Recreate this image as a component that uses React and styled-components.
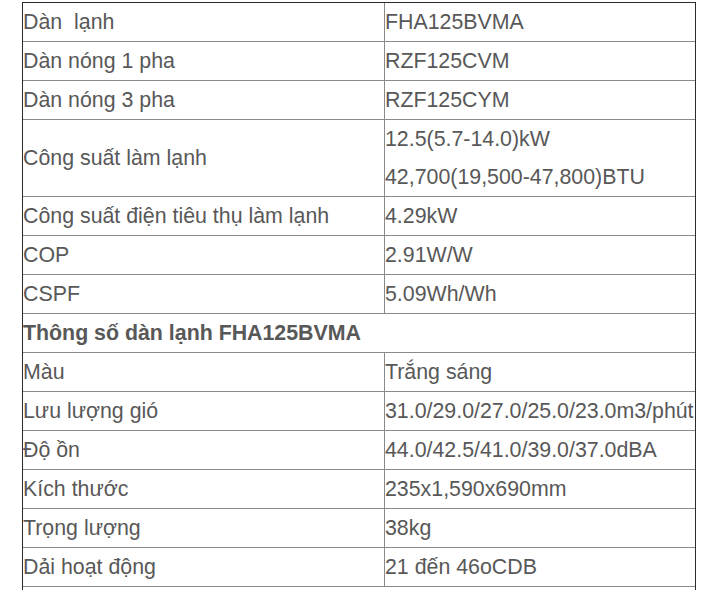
import React from 'react';
import styled, { createGlobalStyle } from 'styled-components';

const GlobalStyle = createGlobalStyle`
    html, body {
        margin: 0;
        padding: 0;
        background: #fff;
        overflow: hidden;
    }
`;

const Page = styled.div`
    padding: 2px 0 0 22px;
    font-family: "Liberation Sans", Arial, sans-serif;
    font-size: 21.35px;
    color: #585858;
`;

const Table = styled.div`
    width: 674px;
    box-sizing: border-box;
    border: 1px solid #2b2b2b;
    border-bottom: none;
`;

const Row = styled.div`
    display: grid;
    grid-template-columns: ${({ $full }) => ($full ? '1fr' : '361px 1fr')};
    min-height: 38px;
    border-bottom: 1px solid #8a8a8a;
`;

const Label = styled.div`
    display: flex;
    align-items: center;
    line-height: 38px;
    white-space: pre;
    font-weight: ${({ $bold }) => ($bold ? 700 : 400)};
`;

const Value = styled.div`
    border-left: 1px solid #8a8a8a;
    line-height: 38px;
    white-space: nowrap;
`;

const rows = [
    ['Dàn\u00a0 lạnh', ['FHA125BVMA']],
    ['Dàn nóng 1 pha', ['RZF125CVM']],
    ['Dàn nóng 3 pha', ['RZF125CYM']],
    ['Công suất làm lạnh', ['12.5(5.7-14.0)kW', '42,700(19,500-47,800)BTU']],
    ['Công suất điện tiêu thụ làm lạnh', ['4.29kW']],
    ['COP', ['2.91W/W']],
    ['CSPF', ['5.09Wh/Wh']],
    { header: 'Thông số dàn lạnh FHA125BVMA' },
    ['Màu', ['Trắng sáng']],
    ['Lưu lượng gió', ['31.0/29.0/27.0/25.0/23.0m3/phút']],
    ['Độ ồn', ['44.0/42.5/41.0/39.0/37.0dBA']],
    ['Kích thước', ['235x1,590x690mm']],
    ['Trọng lượng', ['38kg']],
    ['Dải hoạt động', ['21 đến 46oCDB']],
    { header: '' },
];

export default function App() {
    return (
        <>
            <GlobalStyle />
            <Page>
                <Table>
                    {rows.map((row, i) =>
                        'header' in row ? (
                            <Row key={i} $full>
                                <Label $bold>{row.header}</Label>
                            </Row>
                        ) : (
                            <Row key={i}>
                                <Label>{row[0]}</Label>
                                <Value>
                                    {row[1].map((v) => (
                                        <div key={v}>{v}</div>
                                    ))}
                                </Value>
                            </Row>
                        )
                    )}
                </Table>
            </Page>
        </>
    );
}
